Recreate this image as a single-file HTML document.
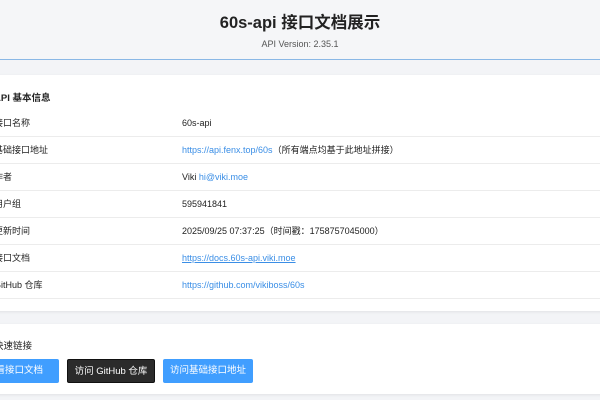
<!DOCTYPE html>
<html><head><meta charset="utf-8"><style>
*{margin:0;padding:0;box-sizing:border-box}
body{width:600px;height:400px;overflow:hidden;background:#f3f4f7;font-family:"Liberation Sans","Noto Sans CJK SC",sans-serif;color:#222;position:relative}
.hdr{position:absolute;left:0;top:0;width:600px;height:60px;background:#f5f6f8;border-bottom:1.5px solid #8ab8e6;text-align:center}
.hdr h1{position:absolute;top:9px;width:100%;font-size:16.5px;font-weight:bold;color:#222}
.hdr p{position:absolute;top:39px;width:100%;font-size:9px;color:#555}
.card{position:absolute;left:-20px;width:640px;background:#fff;box-shadow:0 1px 3px rgba(0,0,0,.08)}
.t{position:absolute;left:14px;font-size:9.5px;font-weight:bold}
.row{position:absolute;left:0;width:640px;height:27px;border-bottom:1px solid #ececec;font-size:9px;line-height:27px}
.row .l{position:absolute;left:14px}
.row .v{position:absolute;left:202px}
a{color:#3a8ee6;text-decoration:none}
.btn{position:absolute;top:359px;height:24px;line-height:24px;font-size:9.5px;color:#fff;text-align:center;border-radius:2px}
</style></head><body>
<div class="hdr"><h1>60s-api 接口文档展示</h1><p>API Version: 2.35.1</p></div>
<div class="card" style="top:75px;height:236px">
<div class="t" style="top:15px">API 基本信息</div>
<div class="row" style="top:35px"><span class="l">接口名称</span><span class="v">60s-api</span></div>
<div class="row" style="top:62px"><span class="l">基础接口地址</span><span class="v"><a>https://api.fenx.top/60s</a>（所有端点均基于此地址拼接）</span></div>
<div class="row" style="top:89px"><span class="l">作者</span><span class="v">Viki <a>hi@viki.moe</a></span></div>
<div class="row" style="top:116px"><span class="l">用户组</span><span class="v">595941841</span></div>
<div class="row" style="top:143px"><span class="l">更新时间</span><span class="v">2025/09/25 07:37:25（时间戳：1758757045000）</span></div>
<div class="row" style="top:170px"><span class="l">接口文档</span><span class="v"><a style="text-decoration:underline">https://docs.60s-api.viki.moe</a></span></div>
<div class="row" style="top:197px"><span class="l">GitHub 仓库</span><span class="v"><a>https://github.com/vikiboss/60s</a></span></div>
</div>
<div class="card" style="top:324px;height:70px">
<div class="t" style="top:14px;font-weight:normal">快速链接</div>
</div>
<div class="btn" style="left:-30px;width:89px;background:#409eff">查看接口文档</div>
<div class="btn" style="left:67px;width:88px;background:#2b2b2b;border:1px solid #111">访问 GitHub 仓库</div>
<div class="btn" style="left:163px;width:90px;background:#409eff">访问基础接口地址</div>
</body></html>
